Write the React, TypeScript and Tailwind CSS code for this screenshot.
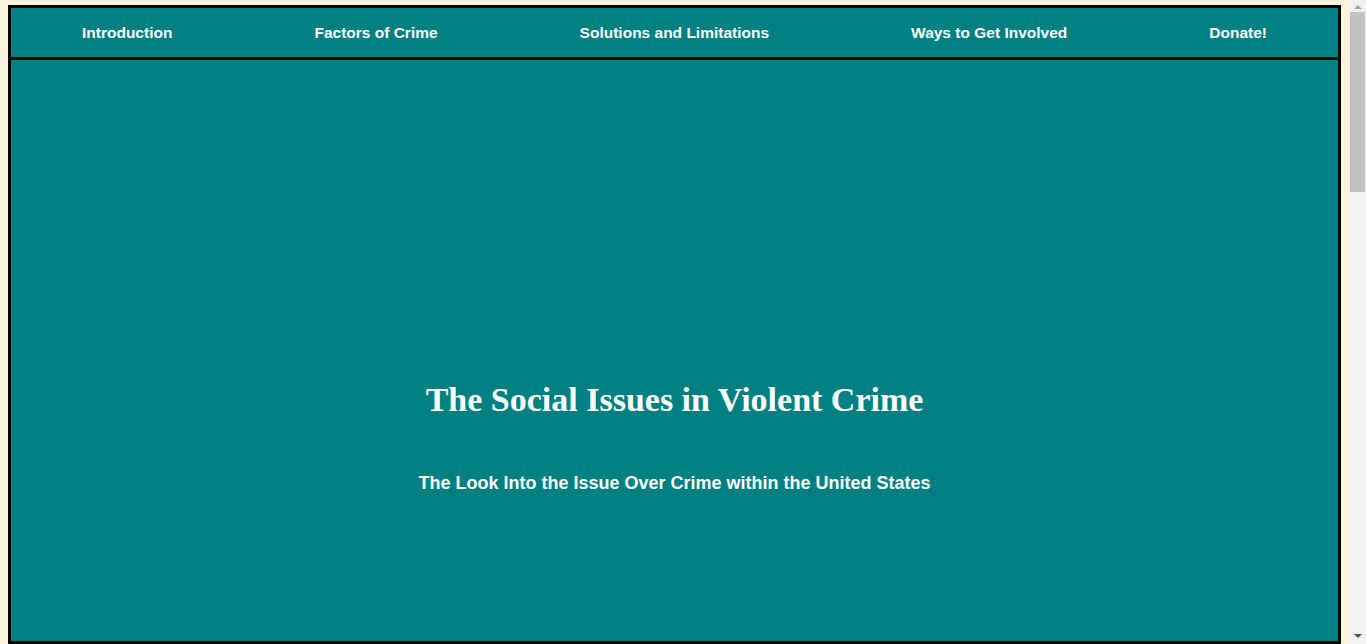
const links = [
  "Introduction",
  "Factors of Crime",
  "Solutions and Limitations",
  "Ways to Get Involved",
  "Donate!",
];

const App = () => {
  return (
    <div className="min-h-screen bg-[#f6f4dc] pl-2 pr-[25px] pt-[5px] pb-2">
      <div className="border-[3px] border-black bg-[#008080] text-white">
        <nav className="flex h-[52px] items-center justify-around border-b-[3px] border-black font-['Liberation_Sans',Arial,sans-serif] text-[15.5px] font-bold">
          {links.map((l) => (
            <a key={l} href="#" className="text-white">
              {l}
            </a>
          ))}
        </nav>
        <section className="flex h-[584px] flex-col items-center border-b-[3px] border-black pt-[319px]">
          <h1 className="font-['Liberation_Serif',Georgia,serif] text-[34px] font-bold leading-[42px]">
            The Social Issues in Violent Crime
          </h1>
          <h3 className="mt-[50px] font-['Liberation_Sans',Arial,sans-serif] text-[18px] font-bold leading-6">
            The Look Into the Issue Over Crime within the United States
          </h3>
        </section>
        <section className="h-[1500px]"></section>
      </div>
      {/* browser scrollbar look-alike */}
      <div className="fixed right-0 top-0 flex h-screen w-[17px] flex-col items-center bg-[#f1f1f1]">
        <div className="mt-[5px] h-0 w-0 border-x-[4px] border-b-[4px] border-x-transparent border-b-[#a3a3a3]"></div>
        <div className="mt-[3px] h-[180px] w-[15px] bg-[#c1c1c1]"></div>
        <div className="mt-auto mb-[6px] h-0 w-0 border-x-[4px] border-t-[4px] border-x-transparent border-t-[#505050]"></div>
      </div>
    </div>
  );
};

export default App;
